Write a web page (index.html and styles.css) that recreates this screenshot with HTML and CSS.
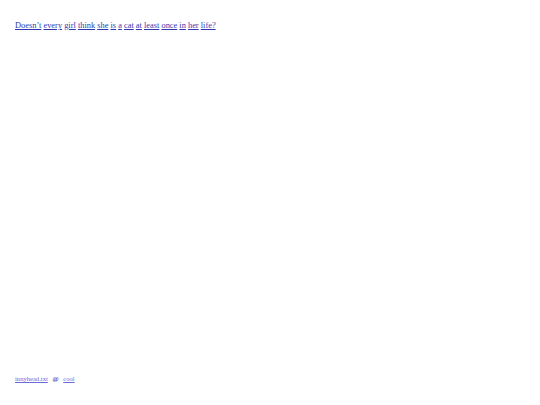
FILE: index.html
```html
<!DOCTYPE html>
<html>
<head>
<meta charset="utf-8">
<link rel="stylesheet" href="styles.css">
</head>
<body>
<div class="page">
  <p class="quote"><a href="#">Doesn’t</a> <a href="#">every</a> <a href="#">girl</a> <a href="#">think</a> <a href="#">she</a> <a href="#">is</a> <a href="#">a</a> <a href="#">cat</a> <a href="#">at</a> <a href="#">least</a> <a href="#">once</a> <a href="#">in</a> <a href="#">her</a> <a href="#">life?</a></p>
  <footer class="foot"><a href="#">innyhead.txt</a> <span class="at">@</span> <a href="#">cool</a></footer>
</div>
</body>
</html>
```
FILE: styles.css
```css
html, body { margin: 0; padding: 0; background: #fff; }
body { font-family: "Liberation Serif", "Times New Roman", serif; }
.page {
  height: 405px;
  box-sizing: border-box;
  padding: 19px 15px 0 15px;
  display: flex;
  flex-direction: column;
  justify-content: space-between;
}
.quote { margin: 0; font-size: 8.4px; line-height: 14px; }
.quote a { color: #3038b0; }
.foot { font-size: 6.6px; line-height: 10px; margin-bottom: 21px; color: #6a6ad8; }
.foot a { color: #6a6ad8; }
.foot .at { color: #5a5ab8; font-weight: bold; margin: 0 3px; }
```
